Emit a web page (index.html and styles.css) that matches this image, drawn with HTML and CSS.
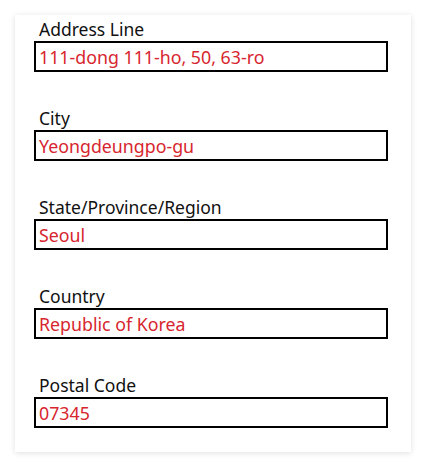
FILE: index.html
```html
<!DOCTYPE html>
<html>
<head>
    <meta charset="UTF-8">
    <title>Address</title>
    <link rel="stylesheet" href="styles.css">
</head>
<body>
    <div class="card">
        <div class="field">
            <label for="addr">Address Line</label>
            <input id="addr" type="text" value="111-dong 111-ho, 50, 63-ro">
        </div>
        <div class="field">
            <label for="city">City</label>
            <input id="city" type="text" value="Yeongdeungpo-gu">
        </div>
        <div class="field">
            <label for="state">State/Province/Region</label>
            <input id="state" type="text" value="Seoul">
        </div>
        <div class="field">
            <label for="country">Country</label>
            <input id="country" type="text" value="Republic of Korea">
        </div>
        <div class="field">
            <label for="postal">Postal Code</label>
            <input id="postal" type="text" value="07345">
        </div>
    </div>
</body>
</html>
```

FILE: styles.css
```css
body {
    margin: 0;
    background-color: #FFF;
    font-family: "Noto Sans", "Open Sans", sans-serif;
}

.card {
    width: 396px;
    box-sizing: border-box;
    margin: 15px;
    padding: 2px 23px 24px 19px;
    background-color: #FFF;
    box-shadow: 0 1px 6px rgb(0 0 0 / 0.13);
    display: flex;
    flex-direction: column;
    gap: 34px;
}

.field {
    display: flex;
    flex-direction: column;
}

.field label {
    font-size: 17.5px;
    line-height: 24px;
    color: #111;
    padding-left: 5px;
}

.field input {
    width: 100%;
    height: 31px;
    box-sizing: border-box;
    border: 2px solid #000;
    padding: 0 3px;
    font-family: inherit;
    font-size: 17.8px;
    color: #D7262E;
    outline: none;
}
```
